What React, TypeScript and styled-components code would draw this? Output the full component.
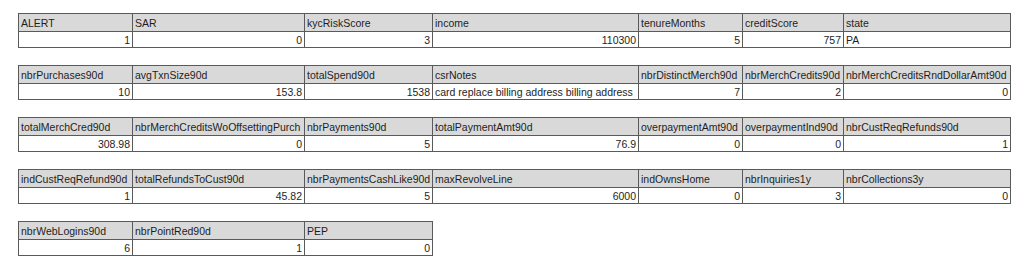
import styled, { createGlobalStyle } from "styled-components"

const GlobalStyle = createGlobalStyle`
  body {
    margin: 0;
    background: #ffffff;
    font-family: "Liberation Sans", Arial, sans-serif;
  }
`

const widths = [114, 172, 128, 206, 104, 101, 167]

type Field = { name: string; value: string; text?: boolean }

const groups: Field[][] = [
  [
    { name: "ALERT", value: "1" },
    { name: "SAR", value: "0" },
    { name: "kycRiskScore", value: "3" },
    { name: "income", value: "110300" },
    { name: "tenureMonths", value: "5" },
    { name: "creditScore", value: "757" },
    { name: "state", value: "PA", text: true },
  ],
  [
    { name: "nbrPurchases90d", value: "10" },
    { name: "avgTxnSize90d", value: "153.8" },
    { name: "totalSpend90d", value: "1538" },
    { name: "csrNotes", value: "card replace billing address billing address", text: true },
    { name: "nbrDistinctMerch90d", value: "7" },
    { name: "nbrMerchCredits90d", value: "2" },
    { name: "nbrMerchCreditsRndDollarAmt90d", value: "0" },
  ],
  [
    { name: "totalMerchCred90d", value: "308.98" },
    { name: "nbrMerchCreditsWoOffsettingPurch", value: "0" },
    { name: "nbrPayments90d", value: "5" },
    { name: "totalPaymentAmt90d", value: "76.9" },
    { name: "overpaymentAmt90d", value: "0" },
    { name: "overpaymentInd90d", value: "0" },
    { name: "nbrCustReqRefunds90d", value: "1" },
  ],
  [
    { name: "indCustReqRefund90d", value: "1" },
    { name: "totalRefundsToCust90d", value: "45.82" },
    { name: "nbrPaymentsCashLike90d", value: "5" },
    { name: "maxRevolveLine", value: "6000" },
    { name: "indOwnsHome", value: "0" },
    { name: "nbrInquiries1y", value: "3" },
    { name: "nbrCollections3y", value: "0" },
  ],
  [
    { name: "nbrWebLogins90d", value: "6" },
    { name: "nbrPointRed90d", value: "1" },
    { name: "PEP", value: "0" },
  ],
]

const App = () => {
  return (
    <Page>
      <GlobalStyle />
      {groups.map((fields, i) => {
        const total = widths.slice(0, fields.length).reduce((a, b) => a + b, 0)
        return (
          <Record key={i} style={{ width: total }}>
            <colgroup>
              {fields.map((f, j) => (
                <col key={f.name} style={{ width: widths[j] }} />
              ))}
            </colgroup>
            <thead>
              <tr>
                {fields.map((f) => (
                  <Head key={f.name}>{f.name}</Head>
                ))}
              </tr>
            </thead>
            <tbody>
              <tr>
                {fields.map((f) => (
                  <Cell key={f.name} $text={f.text}>{f.value}</Cell>
                ))}
              </tr>
            </tbody>
          </Record>
        )
      })}
    </Page>
  )
}

export default App

const Page = styled.div`
  display: flex;
  flex-direction: column;
  align-items: flex-start;
  gap: 17px;
  padding: 13px 0 0 18px;
`

const Record = styled.table`
  border-collapse: collapse;
  table-layout: fixed;
  font-size: 10.5px;
  color: #1e1e1e;
`

const Head = styled.th`
  background: #d9d9d9;
  border: 1px solid #5a5a5a;
  height: 17px;
  padding: 0 2px;
  font-weight: normal;
  text-align: left;
  white-space: nowrap;
  overflow: hidden;
`

const Cell = styled.td<{ $text?: boolean }>`
  background: #ffffff;
  border: 1px solid #5a5a5a;
  height: 15px;
  padding: 0 2px;
  text-align: ${(p) => (p.$text ? "left" : "right")};
  white-space: nowrap;
  overflow: hidden;
`
